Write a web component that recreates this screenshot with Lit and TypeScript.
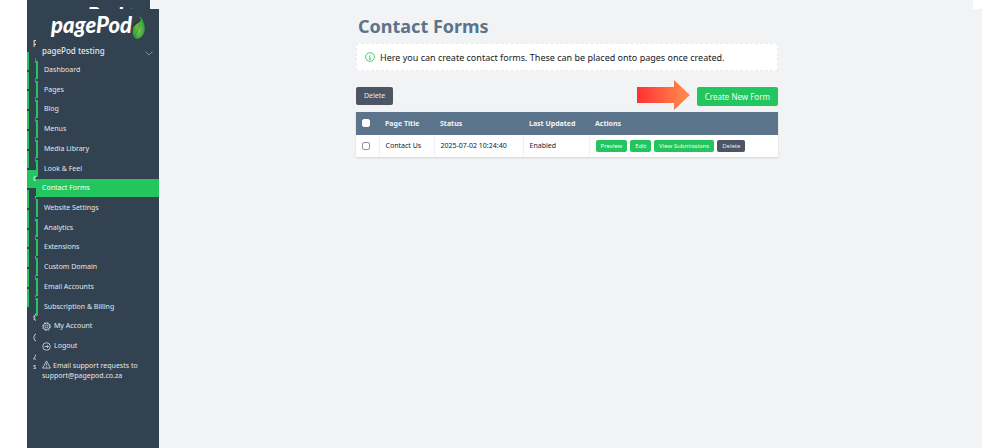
import { LitElement, html, svg, css } from "lit";
import { customElement } from "lit/decorators.js";
import { classMap } from "lit/directives/class-map.js";

const NAV = [
  "Dashboard", "Pages", "Blog", "Menus", "Media Library", "Look & Feel",
  "Contact Forms", "Website Settings", "Analytics", "Extensions",
  "Custom Domain", "Email Accounts", "Subscription & Billing",
];

const accountIcon = svg`<circle cx="12" cy="12" r="9"/><circle cx="12" cy="12" r="4"/><circle cx="12" cy="12" r="10.500" stroke-dasharray="4 4.250"/>`;
const logoutIcon = svg`<circle cx="12" cy="12" r="10"/><path d="M7 12h10M13 8l4 4-4 4"/>`;
const warnIcon = svg`<path d="M12 2.500L1.500 21.500h21zM12 9v6M12 17v2.500"/>`;

@customElement("side-menu")
class SideMenu extends LitElement {
  static styles = css`
    :host { display: block; background: #334250; color: #e3e7ea; font-size: 7px; line-height: 10px; }
    .logo { display: flex; align-items: flex-start; height: 33px; padding: 0 0 0 15px; color: #fff; }
    .word { font: italic 900 22px/32px Lato, sans-serif; }
    .leaf { width: 13px; height: 23px; margin-top: 7px; }
    .site { display: flex; width: 100%; justify-content: space-between; align-items: center; height: 18px;
      padding: 0 6px; border: 0; background: none; color: inherit; font: 500 8px/12px "Noto Sans", sans-serif; }
    .chev { width: 8px; height: 5px; margin-top: 4px; fill: none; stroke: #7890a8; }
    .nav { display: grid; grid-auto-rows: 1fr; gap: 2px; height: 294px; padding-top: 1px; }
    .item { display: flex; align-items: center; padding-left: 6px; border-left: 2px solid #22c55e; color: inherit; text-decoration: none; }
    .active { background: #22c55e; padding-left: 4px; color: #fff; }
    .plain { border-color: transparent; padding-left: 4px; gap: 3px; }
    .icon { width: 9px; height: 9px; fill: none; stroke: currentColor; stroke-width: 2; overflow: visible; }
    .help { margin: 0; padding: 5px 6px 0; }
    .help .icon { vertical-align: -1px; margin-right: 2px; }
    .help a { color: inherit; text-decoration: none; }
  `;
  render() {
    return html`
      <div class="logo">
        <span class="word">pagePod</span>
        <svg class="leaf" viewBox="0 0 13 23" aria-hidden="true">
          <defs><radialGradient id="g" cx=".5" cy=".6" r=".6"><stop offset="0" stop-color="#8cc63f"/><stop offset=".5" stop-color="#4fae46"/><stop offset="1" stop-color="#0f9444"/></radialGradient></defs>
          <path d="M8 0C12 4 14 12 12 17C10 22 5 24 3 22C0 20 0 12 2 8C4 5 7 4 8 0Z" fill="url(#g)"/>
          <path d="M8 1C7 4 3 6 1 9C0 11 0 13 0 14C1 10 4 8 6 7C8 6 9 4 8 1Z" fill="#3c3024"/>
          <path d="M3 21C4 16 7 13 8 8" fill="none" stroke="#2d8c3d" stroke-width=".8"/>
        </svg>
      </div>
      <button class="site" type="button">pagePod testing
        <svg class="chev" viewBox="0 0 8 5" aria-hidden="true"><path d="M.5.500L4 4L7.500.500"/></svg>
      </button>
      <nav class="nav">
        ${NAV.map((n) => html`<a href="#" class=${classMap({ item: true, active: n === "Contact Forms" })}>${n}</a>`)}
        <a href="#" class="item plain"><svg class="icon" viewBox="0 0 24 24">${accountIcon}</svg>My Account</a>
        <a href="#" class="item plain"><svg class="icon" viewBox="0 0 24 24">${logoutIcon}</svg>Logout</a>
      </nav>
      <p class="help"><svg class="icon" viewBox="0 0 24 24">${warnIcon}</svg>Email support requests to <a href="mailto:support@pagepod.co.za">support@pagepod.co.za</a></p>
    `;
  }
}

@customElement("app-root")
class AppRoot extends LitElement {
  static styles = css`
    :host { display: block; height: 100vh; overflow: hidden; background: #fff; font-family: "Noto Sans", sans-serif; }
    * { box-sizing: border-box; }
    .stack { display: grid; min-height: 100%; padding: 0 18px 0 27px; }
    .sheet { grid-area: 1 / 1; display: grid; grid-template-columns: 123px 1fr; background: #f2f3f5; }
    .back { margin-right: 9px; }
    .front { margin: 9px 0 0 9px; }
    .main { padding: 5px 12px 20px 5px; }
    .column { max-width: 422px; margin: 0 auto; }
    h1 { margin: 0 0 4px 2px; font-size: 18px; line-height: 25px; font-weight: 700; color: #5b738b; }
    .info { display: flex; align-items: center; gap: 5px; margin: 0; padding: 0 8px; height: 28px; background: #fff; border: 1px dashed #e9ebee; font-size: 9px; line-height: 13px; color: #15191e; }
    .info svg { width: 10px; height: 10px; fill: none; stroke: #22c55e; stroke-width: 2; }
    .tools { display: flex; align-items: flex-start; margin: 16px 0 6px; }
    button { border: 0; border-radius: 2px; background: #22c55e; color: #f0fdf4; font: 7px/10px "Noto Sans", sans-serif; white-space: nowrap; }
    .dark { background: #4b5563; color: #e5e7eb; }
    .bulk { padding: 4px 8px; }
    .create { padding: 4px 8px; font-size: 8px; line-height: 11px; }
    .arrow { width: 53px; height: 30px; margin: -7px 7px -4px auto; }
    table { width: 100%; table-layout: fixed; border-collapse: collapse; background: #fff; font-size: 7px; line-height: 10px; color: #111827; box-shadow: 0 1px 2px #0002; }
    th, td { height: 22px; padding: 0 6px; text-align: left; white-space: nowrap; }
    th { height: 23px; background: #5b738b; color: #f1f4f7; font-weight: 700; }
    td + td { border-left: 1px solid #f0f1f3; }
    .c1 { width: 23px; } .c2 { width: 55px; } .c3 { width: 89px; } .c4 { width: 66px; }
    input { appearance: none; display: block; width: 8px; height: 8px; margin: 0; border: 1px solid #8b939e; border-radius: 2px; background: #fff; }
    th input { border-color: #fff; margin-bottom: 2px; }
    .acts { display: flex; gap: 3px; }
    .acts button { padding: 1px 5px; font-size: 6px; }
  `;
  render() {
    return html`
      <div class="stack">
        <div class="sheet back" aria-hidden="true" inert><side-menu></side-menu></div>
        <div class="sheet front">
          <side-menu></side-menu>
          <main class="main"><div class="column">
            <h1>Contact Forms</h1>
            <p class="info"><svg viewBox="0 0 24 24" aria-hidden="true"><circle cx="12" cy="12" r="10.500"/><path d="M10 11h2v6M9.500 17h5M12 6v2.500"/></svg>Here you can create contact forms. These can be placed onto pages once created.</p>
            <div class="tools">
              <button class="dark bulk" type="button">Delete</button>
              <svg class="arrow" viewBox="0 0 53 30" aria-hidden="true">
                <defs><linearGradient id="a"><stop offset="0" stop-color="#ff3131"/><stop offset="1" stop-color="#ff914d"/></linearGradient></defs>
                <path d="M0 7H37V0L53 15L37 30V23H0Z" fill="url(#a)"/>
              </svg>
              <button class="create" type="button">Create New Form</button>
            </div>
            <table>
              <colgroup><col class="c1"><col class="c2"><col class="c3"><col class="c4"><col></colgroup>
              <thead><tr><th><input type="checkbox" aria-label="Select all"></th><th>Page Title</th><th>Status</th><th>Last Updated</th><th>Actions</th></tr></thead>
              <tbody><tr>
                <td><input type="checkbox" aria-label="Select Contact Us"></td><td>Contact Us</td><td>2025-07-02 10:24:40</td><td>Enabled</td>
                <td><div class="acts"><button type="button">Preview</button><button type="button">Edit</button><button type="button">View Submissions</button><button class="dark" type="button">Delete</button></div></td>
              </tr></tbody>
            </table>
          </div></main>
        </div>
      </div>
    `;
  }
}
